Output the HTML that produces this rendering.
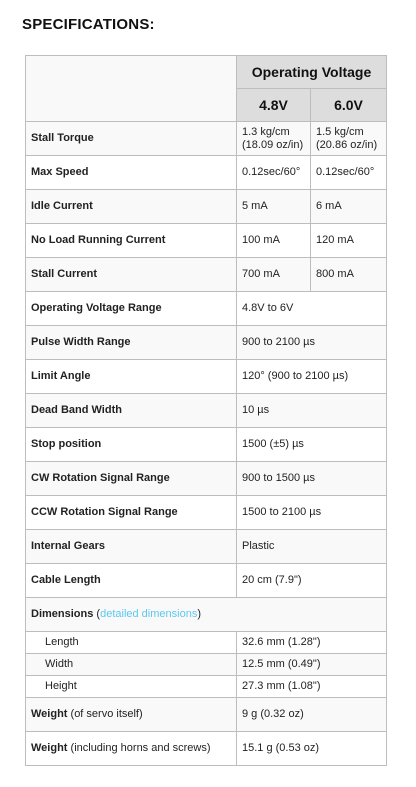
<!DOCTYPE html>
<html><head><style>
body{margin:0;background:#fff;font-family:"Liberation Sans",sans-serif;color:#222;}
h2{position:absolute;left:22px;top:16px;margin:0;font-size:15px;font-weight:bold;letter-spacing:0.2px;color:#111;}
table{position:absolute;left:25px;top:55px;border-collapse:collapse;table-layout:fixed;width:361px;font-size:11px;}
td,th{border:1px solid #bdbdbd;padding:0 0 0 5px;vertical-align:middle;line-height:13px;}
th{background:#ddd;font-size:14px;font-weight:bold;text-align:center;padding:0;color:#111;}
tr{height:34px;}
tr.h{height:33px;}
tr.s{height:22px;}
tr.g td{background:#f9f9f9;}
td.l{font-weight:bold;}
td.i{padding-left:19px;}
a{color:#5bc8f0;text-decoration:none;}
</style></head><body>
<h2>SPECIFICATIONS:</h2>
<table>
<colgroup><col style="width:211px"><col style="width:74px"><col style="width:76px"></colgroup>
<tr class="h"><td rowspan="2" style="background:#f9f9f9"></td><th colspan="2">Operating Voltage</th></tr>
<tr class="h"><th>4.8V</th><th>6.0V</th></tr>
<tr class="g"><td class="l">Stall Torque</td><td>1.3 kg/cm<br>(18.09 oz/in)</td><td>1.5 kg/cm<br>(20.86 oz/in)</td></tr>
<tr><td class="l">Max Speed</td><td>0.12sec/60°</td><td>0.12sec/60°</td></tr>
<tr class="g"><td class="l">Idle Current</td><td>5 mA</td><td>6 mA</td></tr>
<tr><td class="l">No Load Running Current</td><td>100 mA</td><td>120 mA</td></tr>
<tr class="g"><td class="l">Stall Current</td><td>700 mA</td><td>800 mA</td></tr>
<tr><td class="l">Operating Voltage Range</td><td colspan="2">4.8V to 6V</td></tr>
<tr class="g"><td class="l">Pulse Width Range</td><td colspan="2">900 to 2100 µs</td></tr>
<tr><td class="l">Limit Angle</td><td colspan="2">120° (900 to 2100 µs)</td></tr>
<tr class="g"><td class="l">Dead Band Width</td><td colspan="2">10 µs</td></tr>
<tr><td class="l">Stop position</td><td colspan="2">1500 (±5) µs</td></tr>
<tr class="g"><td class="l">CW Rotation Signal Range</td><td colspan="2">900 to 1500 µs</td></tr>
<tr><td class="l">CCW Rotation Signal Range</td><td colspan="2">1500 to 2100 µs</td></tr>
<tr class="g"><td class="l">Internal Gears</td><td colspan="2">Plastic</td></tr>
<tr><td class="l">Cable Length</td><td colspan="2">20 cm (7.9")</td></tr>
<tr class="g"><td colspan="3"><b>Dimensions</b> (<a>detailed dimensions</a>)</td></tr>
<tr class="s"><td class="i">Length</td><td colspan="2">32.6 mm (1.28")</td></tr>
<tr class="s g"><td class="i">Width</td><td colspan="2">12.5 mm (0.49")</td></tr>
<tr class="s"><td class="i">Height</td><td colspan="2">27.3 mm (1.08")</td></tr>
<tr class="g"><td><b>Weight</b> (of servo itself)</td><td colspan="2">9 g (0.32 oz)</td></tr>
<tr><td><b>Weight</b> (including horns and screws)</td><td colspan="2">15.1 g (0.53 oz)</td></tr>
</table>
</body></html>
